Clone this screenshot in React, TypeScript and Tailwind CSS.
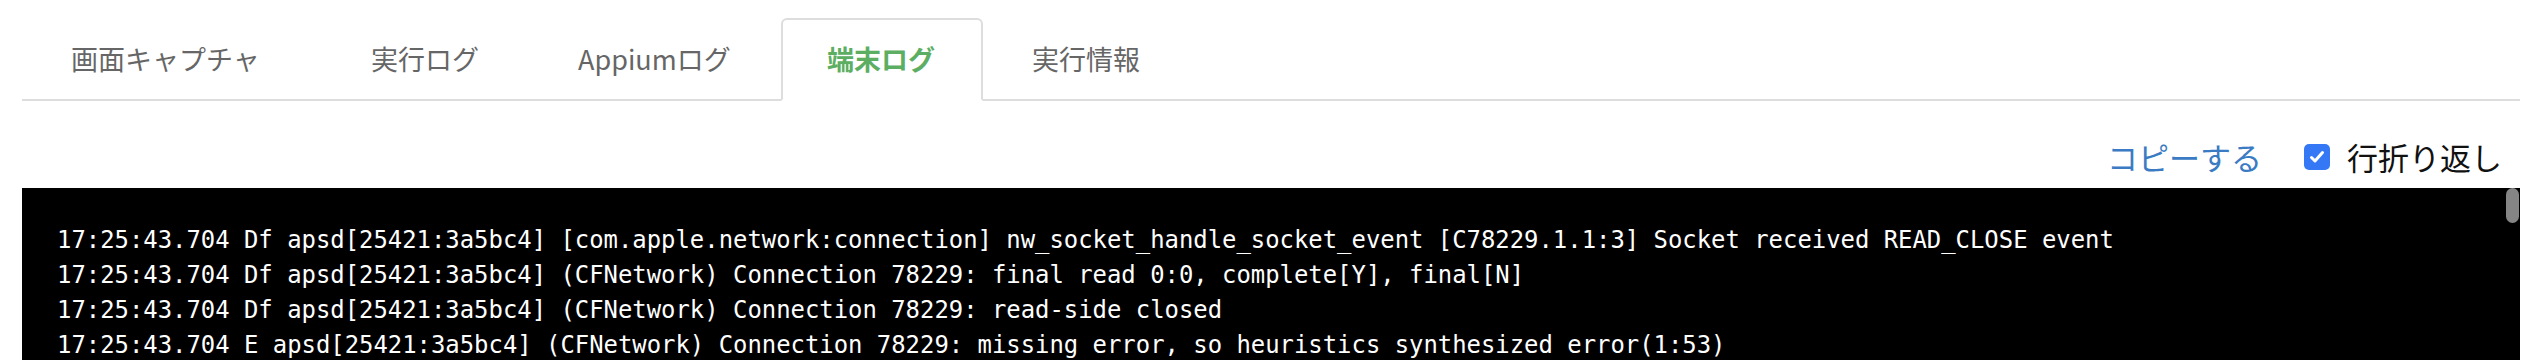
import React from 'react';

const tabs = [
  { label: '画面キャプチャ', width: 'w-[300px]' },
  { label: '実行ログ', width: 'w-[207px]' },
  { label: 'Appiumログ', width: 'w-[252px]' },
  { label: '端末ログ', width: 'w-[202px]', active: true },
  { label: '実行情報', width: 'w-[210px]' },
];

const logLines = [
  '17:25:43.704 Df apsd[25421:3a5bc4] [com.apple.network:connection] nw_socket_handle_socket_event [C78229.1.1:3] Socket received READ_CLOSE event',
  '17:25:43.704 Df apsd[25421:3a5bc4] (CFNetwork) Connection 78229: final read 0:0, complete[Y], final[N]',
  '17:25:43.704 Df apsd[25421:3a5bc4] (CFNetwork) Connection 78229: read-side closed',
  '17:25:43.704 E apsd[25421:3a5bc4] (CFNetwork) Connection 78229: missing error, so heuristics synthesized error(1:53)',
];

const App: React.FC = () => {
  return (
    <div className="bg-white min-h-screen pt-[18px] pl-[22px] pr-[20px] font-['Noto_Sans_CJK_JP',sans-serif]">
      {/* tabs */}
      <div className="flex border-b-2 border-[#dddddd]">
        {tabs.map((tab) => (
          <div
            key={tab.label}
            className={
              tab.active
                ? `${tab.width} h-[83px] -mb-[2px] flex items-center pl-[44px] border-2 border-[#dddddd] border-b-white rounded-t-[6px] bg-white text-[27px] font-bold text-[#5cae62]`
                : `${tab.width} h-[83px] -mb-[2px] flex items-center pl-[47px] border-2 border-transparent text-[27px] text-[#666666]`
            }
          >
            {tab.label}
          </div>
        ))}
      </div>

      {/* actions */}
      <div className="flex justify-end items-center h-[44px] mt-[34px] mb-[9px] pr-[18px] text-[31px]">
        <a href="#" className="text-[#3a7bc4]">コピーする</a>
        <label className="flex items-center ml-[42px] text-[#111111]">
          <span className="w-[26px] h-[26px] rounded-[5px] bg-[#3478f6] flex items-center justify-center mr-[17px]">
            <svg width="18" height="18" viewBox="0 0 18 18" fill="none">
              <path d="M3.5 9.5l3.5 3.5 7.5-8.5" stroke="white" strokeWidth="3" strokeLinecap="round" strokeLinejoin="round" />
            </svg>
          </span>
          行折り返し
        </label>
      </div>

      {/* log output */}
      <div className="relative bg-black h-[400px] overflow-hidden py-[35px] pl-[35px] pr-[35px] font-['DejaVu_Sans_Mono',monospace] text-[23.9px] leading-[35px] text-white">
        {logLines.map((line, i) => (
          <div key={i} className="whitespace-pre">{line}</div>
        ))}
        <div className="absolute top-0 right-[1px] w-[13px] h-[35px] rounded-full bg-[#858585]" />
      </div>
    </div>
  );
};

export default App;
